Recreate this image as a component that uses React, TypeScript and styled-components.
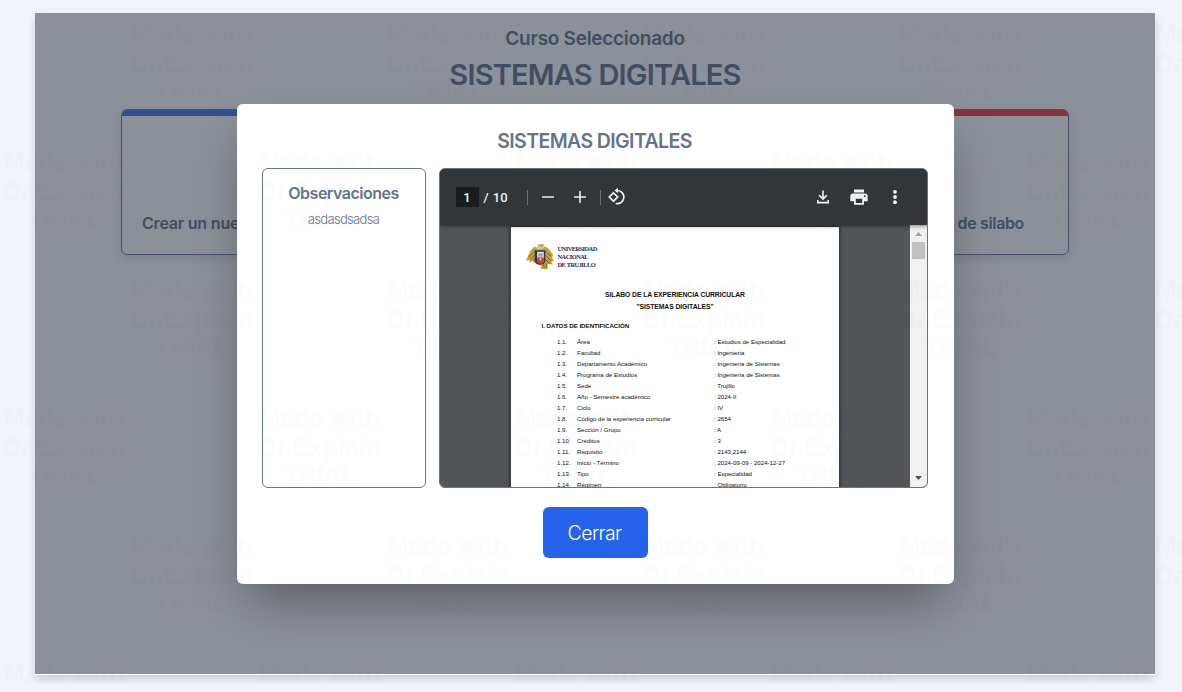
import React from "react";
import styled, { createGlobalStyle } from "styled-components";

const GlobalStyle = createGlobalStyle`
  * { box-sizing: border-box; }
  body { margin: 0; background: #f1f5f9; font-family: Inter, "Liberation Sans", sans-serif; }
`;

const Page = styled.div`
  position: relative;
  height: 692px;
  padding: 13px 27px 18px 35px;
  overflow: hidden;
  background: #f1f5fa;
`;
const Stage = styled.main`
  position: relative;
  height: 661px;
  background: #8c9099;
  box-shadow: 0 1px 0 #fff, 0 5px 8px rgba(40, 55, 75, 0.2);
`;
const CourseHeader = styled.header`
  display: flex;
  flex-direction: column;
  align-items: center;
  padding-top: 12px;
  color: #414d63;
`;
const Eyebrow = styled.p`
  margin: 0;
  font-size: 19px;
  line-height: 28px;
  font-weight: 600;
  letter-spacing: -0.28px;
  white-space: nowrap;
`;
const CourseName = styled.h1`
  margin: 4px 0 0;
  font-size: 29px;
  line-height: 36px;
  font-weight: 600;
  letter-spacing: -0.78px;
  white-space: nowrap;
`;
const Cards = styled.div`
  display: flex;
  justify-content: space-between;
  padding: 16px 86px 0;
`;
const Card = styled.section<{ $accent: string }>`
  display: flex;
  flex-direction: column;
  width: 207px;
  height: 146px;
  overflow: hidden;
  border: 1px solid #46536b;
  border-radius: 6px;
  box-shadow: 0 4px 8px rgba(30, 40, 60, 0.12);
  color: #414d63;
  &::before { content: ""; height: 6px; background: ${(p) => p.$accent}; }
`;
const CardLabel = styled.h3<{ $end?: boolean }>`
  margin: auto ${(p) => (p.$end ? 44 : 20)}px 19px 20px;
  font-size: 16px;
  line-height: 24px;
  font-weight: 600;
  letter-spacing: ${(p) => (p.$end ? -0.35 : -0.2)}px;
  white-space: nowrap;
  text-align: ${(p) => (p.$end ? "right" : "left")};
`;
const Overlay = styled.div`
  position: absolute;
  inset: 0;
  display: flex;
  justify-content: center;
  align-items: flex-start;
  padding-top: 91px;
`;
const Modal = styled.div`
  display: flex;
  flex-direction: column;
  align-items: center;
  width: 717px;
  height: 480px;
  padding: 23px 26px 26px 25px;
  background: #fff;
  border-radius: 6px;
  box-shadow: 0 25px 50px -12px rgba(0, 0, 0, 0.4);
  color: #64748b;
`;
const ModalTitle = styled.h2`
  margin: 0 0 13px;
  font-size: 19.5px;
  line-height: 28px;
  font-weight: 600;
  letter-spacing: -0.6px;
  white-space: nowrap;
`;
const Columns = styled.div`
  display: grid;
  grid-template-columns: 164px 489px;
  gap: 13px;
  height: 320px;
`;
const Notes = styled.aside`
  display: flex;
  flex-direction: column;
  align-items: center;
  padding-top: 12px;
  border: 1px solid #64748b;
  border-radius: 6px;
`;
const NotesTitle = styled.h3`
  margin: 0;
  font-size: 16px;
  line-height: 24px;
  font-weight: 600;
  letter-spacing: -0.5px;
`;
const NotesText = styled.p`
  margin: 4px 0 0;
  font-size: 13px;
  line-height: 20px;
  font-weight: 300;
  letter-spacing: -0.68px;
`;
const Viewer = styled.div`
  display: flex;
  flex-direction: column;
  overflow: hidden;
  border: 1px solid #64748b;
  border-radius: 6px;
  background: #525659;
`;
const Toolbar = styled.div`
  position: relative;
  display: flex;
  flex: 0 0 56px;
  align-items: center;
  padding: 0 22px 0 16px;
  background: #323639;
  color: #f1f1f1;
  font: 500 13px/20px Roboto, sans-serif;
  box-shadow: 0 1px 4px rgba(0, 0, 0, 0.5);
`;
const PageInput = styled.span`
  width: 23px;
  height: 20px;
  padding-top: 1px;
  background: #191b1c;
  text-align: center;
`;
const PageCount = styled.span`
  width: 31px;
  margin-left: 5px;
  padding-top: 1px;
  white-space: pre;
  word-spacing: 1px;
`;
const Divider = styled.i<{ $gap: number }>`
  width: 1px;
  height: 15px;
  margin-left: ${(p) => p.$gap}px;
  background: #6d7072;
`;
const Glyph = styled.svg<{ $gap: number }>`
  flex: none;
  width: 20px;
  height: 20px;
  margin-left: ${(p) => p.$gap}px;
  fill: #f1f1f1;
`;
const Spacer = styled.span`
  flex: 1;
`;
const Body = styled.div`
  display: flex;
  flex: 1;
  min-height: 0;
`;
const Canvas = styled.div`
  flex: 1;
  overflow: hidden;
  padding: 2px 71px 0;
`;
const Sheet = styled.article`
  height: 300px;
  padding: 15px 15px 0;
  overflow: hidden;
  background: #fff;
  box-shadow: 0 0 4px 1px rgba(0, 0, 0, 0.5);
  color: #111;
  font-family: "Liberation Sans", sans-serif;
`;
const Brand = styled.div`
  display: flex;
  align-items: center;
  gap: 4px;
  height: 30px;
`;
const BrandName = styled.div`
  color: #1d2c5c;
  font: 700 6.4px/8px "Liberation Serif", serif;
  letter-spacing: -0.53px;
  word-spacing: 0.5px;
  white-space: nowrap;
`;
const SheetTitle = styled.div`
  margin-top: 17px;
  padding-left: 1px;
  font-size: 6.8px;
  line-height: 12px;
  font-weight: 700;
  text-align: center;
  letter-spacing: -0.08px;
`;
const SheetSection = styled.div`
  margin: 8px 0 5px 16px;
  font-size: 6.2px;
  line-height: 10px;
  font-weight: 700;
  letter-spacing: -0.03px;
`;
const Field = styled.div`
  display: grid;
  grid-template-columns: 20px 137px 1fr;
  padding-left: 31.5px;
  font-size: 6.1px;
  line-height: 11px;
  white-space: nowrap;
`;
const Scrollbar = styled.div`
  display: flex;
  flex-direction: column;
  align-items: center;
  justify-content: space-between;
  width: 17px;
  background: #f1f1f1;
`;
const ScrollStart = styled.div`
  display: flex;
  flex-direction: column;
  align-items: center;
`;
const Thumb = styled.div`
  width: 13px;
  height: 17px;
  background: #c1c1c1;
`;
const Arrow = styled.svg`
  display: block;
  width: 17px;
  height: 17px;
`;
const CloseButton = styled.button`
  width: 105px;
  height: 51px;
  margin: 19px 0 0 1px;
  padding: 0 1px 0 0;
  border: 0;
  border-radius: 6px;
  background: #2563eb;
  color: #fff;
  font: 300 19.5px/28px Inter, sans-serif;
  letter-spacing: -0.6px;
`;
const Watermarks = styled.div`
  position: absolute;
  inset: 0;
  pointer-events: none;
  overflow: hidden;
  opacity: 0.008;
`;
const MarkRow = styled.div<{ $shift: number }>`
  display: flex;
  height: 128px;
  padding-top: 20px;
  margin-left: ${(p) => p.$shift}px;
`;
const Mark = styled.div`
  flex: 0 0 256px;
  color: #3c3258;
  font: 700 25px/28.5px "Liberation Sans", sans-serif;
  text-align: center;
`;

const fields: [string, string][] = [
  ["Área", "Estudios de Especialidad"],
  ["Facultad", "Ingeniería"],
  ["Departamento Académico", "Ingeniería de Sistemas"],
  ["Programa de Estudios", "Ingeniería de Sistemas"],
  ["Sede", "Trujillo"],
  ["Año - Semestre académico", "2024-II"],
  ["Ciclo", "IV"],
  ["Código de la experiencia curricular", "2654"],
  ["Sección / Grupo", "A"],
  ["Créditos", "3"],
  ["Requisito", "2143,2144"],
  ["Inicio - Término", "2024-09-09 - 2024-12-27"],
  ["Tipo", "Especialidad"],
  ["Régimen", "Obligatorio"],
];

const Crest = () => (
  <svg width="28" height="28" viewBox="0 0 29 28">
    <path d="M12 5L9 3 5 7 2 13 0 18l4-1-1 3 4-2 1 2 3-1 2 3 3 1-1 4 4-1 1 1 3-1-1-4 2-1 4 1-2-3 3-1-2-3 1-3-4-6-4-3-4 2z" fill="#c5a32c" />
    <path d="M3 14l6-6M4 17l6-6M7 18l3-3M20 8l6 5M20 12l6 6M19 16l6 5M18 22l1 4M21 21v4" stroke="#65531e" strokeWidth=".8" />
    <path d="M11 6l1-4 3-2 3 1 1 3-2 2z" fill="#d6c891" />
    <path d="M13 1l2 2 3-2" stroke="#807846" fill="none" />
    <path d="M9 7h11v11c0 3-3 4-5.500 4S9 21 9 18z" fill="#243665" />
    <path d="M11.500 8.500h7v9c0 2-1.500 3-3.500 3s-3.500-1-3.500-3z" fill="#e9d6cb" />
    <path d="M11.500 14.500h7v3c0 2-1.500 3-3.500 3s-3.500-1-3.500-3z" fill="#d2373e" />
    <path d="M13 10.500h4v3h-4z" fill="#72a7c7" />
    <path d="M14 15.500h2v2h-2z" fill="#efd75b" />
  </svg>
);

export default function App() {
  return (
    <>
      <GlobalStyle />
      <Page>
        <Stage>
          <CourseHeader>
            <Eyebrow>Curso Seleccionado</Eyebrow>
            <CourseName>SISTEMAS DIGITALES</CourseName>
          </CourseHeader>
          <Cards>
            <Card $accent="#2c5196"><CardLabel>Crear un nuevo silabo</CardLabel></Card>
            <Card $accent="#873239"><CardLabel $end>Estado de silabo</CardLabel></Card>
          </Cards>
          <Overlay>
            <Modal role="dialog">
              <ModalTitle>SISTEMAS DIGITALES</ModalTitle>
              <Columns>
                <Notes>
                  <NotesTitle>Observaciones</NotesTitle>
                  <NotesText>asdasdsadsa</NotesText>
                </Notes>
                <Viewer>
                  <Toolbar>
                    <PageInput>1</PageInput>
                    <PageCount>/ 10</PageCount>
                    <Divider $gap={12} />
                    <Glyph $gap={10} viewBox="0 0 20 20"><path d="M4 9.200h12v1.600H4z" /></Glyph>
                    <Glyph $gap={12} viewBox="0 0 20 20"><path d="M9.200 4h1.600v5.200H16v1.600h-5.200V16H9.200v-5.200H4V9.200h5.200z" /></Glyph>
                    <Divider $gap={10} />
                    <Glyph $gap={6} viewBox="0 0 20 20">
                      <path d="M6.500 5.800 10.700 10 6.500 14.200 2.300 10z" fill="none" stroke="#f1f1f1" strokeWidth="1.700" />
                      <path d="M9 3.500h1.500a6.600 6.600 0 1 1-1.800 13" fill="none" stroke="#f1f1f1" strokeWidth="1.700" />
                      <path d="M11 .8v5.400L7.500 3.500z" />
                    </Glyph>
                    <Spacer />
                    <Glyph $gap={0} viewBox="0 0 20 20">
                      <path d="M9.200 3.500h1.600v6.600l2.500-2.400 1.200 1.100L10 13.200 5.500 8.800l1.200-1.100 2.500 2.400zM4 13h1.600v1.800h8.800V13H16v3.400H4z" />
                    </Glyph>
                    <Glyph $gap={16} viewBox="0 0 20 20">
                      <path fillRule="evenodd" d="M5 2.500h10v3H5zM4 6.500h12c1.600 0 2.700 1.100 2.700 2.600v5.200H15v3.500H5v-3.500H1.300V9.100C1.300 7.600 2.400 6.500 4 6.500zM6.800 11.700v4.300h6.400v-4.300zM15.700 8.300a.9.900 0 1 0 0 1.800.9.900 0 0 0 0-1.800z" />
                    </Glyph>
                    <Glyph $gap={16} viewBox="0 0 20 20">
                      <circle cx="10" cy="4.800" r="1.900" /><circle cx="10" cy="10" r="1.900" /><circle cx="10" cy="15.200" r="1.900" />
                    </Glyph>
                  </Toolbar>
                  <Body>
                    <Canvas>
                      <Sheet>
                        <Brand>
                          <Crest />
                          <BrandName>UNIVERSIDAD<br />NACIONAL<br />DE TRUJILLO</BrandName>
                        </Brand>
                        <SheetTitle>SILABO DE LA EXPERIENCIA CURRICULAR<br />"SISTEMAS DIGITALES"</SheetTitle>
                        <SheetSection>I. DATOS DE IDENTIFICACIÓN</SheetSection>
                        {fields.map(([label, value], i) => (
                          <Field key={label}>
                            <span>1.{i + 1}.</span><span>{label}</span><span>: {value}</span>
                          </Field>
                        ))}
                      </Sheet>
                    </Canvas>
                    <Scrollbar>
                      <ScrollStart>
                        <Arrow viewBox="0 0 17 17"><path d="M5 11l3.500-4 3.500 4z" fill="#a3a3a3" /></Arrow>
                        <Thumb />
                      </ScrollStart>
                      <Arrow viewBox="0 0 17 17"><path d="M5 6h7l-3.500 4z" fill="#505050" /></Arrow>
                    </Scrollbar>
                  </Body>
                </Viewer>
              </Columns>
              <CloseButton>Cerrar</CloseButton>
            </Modal>
          </Overlay>
        </Stage>
        <Watermarks aria-hidden="true">
          {[0, 1, 2, 3, 4, 5].map((row) => (
            <MarkRow key={row} $shift={row % 2 ? -64 : 64}>
              {[0, 1, 2, 3, 4].map((col) => (
                <Mark key={col}>Made with<br />Dr.Explain<br />TRIAL</Mark>
              ))}
            </MarkRow>
          ))}
        </Watermarks>
      </Page>
    </>
  );
}
